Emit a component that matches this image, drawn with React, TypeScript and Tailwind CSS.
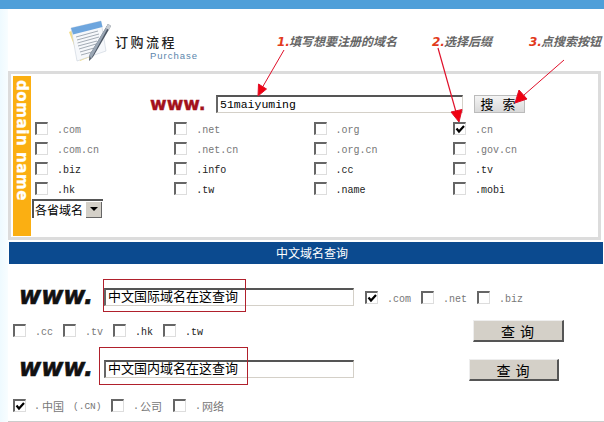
import React from "react";

const cjk = "font-['Noto_Sans_CJK_SC','Liberation_Mono',monospace]";
const mono = "font-['Liberation_Mono','Noto_Sans_CJK_SC',monospace]";

function Box({ checked = false }: { checked?: boolean }) {
  return (
    <span className="block w-[13px] h-[13px] shrink-0 bg-white border-t-2 border-l-2 border-r border-b border-t-[#666] border-l-[#666] border-r-[#ddd] border-b-[#ddd]">
      {checked && (
        <svg viewBox="0 0 10 10" className="w-[10px] h-[10px]">
          <path d="M1.5 4.5 L4 7.5 L9 2" fill="none" stroke="#000" strokeWidth="2.2" />
        </svg>
      )}
    </span>
  );
}

function Tld({ label, checked, dark, className }: { label: string; checked?: boolean; dark?: boolean; className?: string }) {
  return (
    <div className={`flex items-start ${className ?? ""}`}>
      <Box checked={checked} />
      <span className={`ml-[9px] mt-[2px] text-[10px] leading-[13px] whitespace-pre ${mono} ${dark ? "text-[#222]" : "text-[#777]"}`}>{label}</span>
    </div>
  );
}

function Note({ n, text, className }: { n: string; text: string; className?: string }) {
  return (
    <div className={`flex items-baseline italic font-bold text-[12px] leading-[16px] whitespace-nowrap ${className ?? ""}`}>
      <span className="text-[#e23a1c] font-['DejaVu_Sans'] text-[12px] w-[12px]">{n}</span>
      <span className={`text-[#666] ${cjk}`}>{text}</span>
    </div>
  );
}

function Field({ value, mono: isMono }: { value: string; mono?: boolean }) {
  return (
    <input
      readOnly
      value={value}
      className={`block h-[18px] bg-white pl-[2px] text-black outline-none border-t-2 border-l-2 border-r border-b border-t-[#555] border-l-[#666] border-r-[#d4d0c8] border-b-[#d4d0c8] ${isMono ? `w-[247px] text-[11.5px] ${mono}` : `w-[250px] pb-[3px] text-[13px] ${cjk}`}`}
    />
  );
}

function QueryButton({ className }: { className?: string }) {
  return (
    <button className={`h-[22px] bg-[#d4d0c8] border-b-2 border-r-2 border-b-[#555] border-r-[#555] border-t border-l border-t-[#eee] border-l-[#eee] text-[14px] leading-[16px] tracking-[1px] text-black ${cjk} ${className ?? ""}`}>
      查 询
    </button>
  );
}

function Www({ children }: { children: string }) {
  return <span className="block w-[85px] -mt-[2px] font-['DejaVu_Sans'] font-bold italic text-[24px] leading-[18px] text-[#111] [-webkit-text-stroke:0.6px_#111]">{children}</span>;
}

const grid: [string, boolean?, boolean?][] = [
  [".com"], [".net"], [".org"], [".cn", true],
  [".com.cn"], [".net.cn"], [".org.cn"], [".gov.cn"],
  [".biz", false, true], [".info", false, true], [".cc", false, true], [".tv", false, true],
  [".hk", false, true], [".tw", false, true], [".name", false, true], [".mobi", false, true],
];

function Logo() {
  return (
    <svg viewBox="0 0 44 44" className="w-[44px] h-[44px] shrink-0">
      <path d="M1 13 L10 9 L22 38 L12 42 Z" fill="#f3dc87" />
      <path d="M3 9 L33 2 L38 32 L9 42 Z" fill="#f6f8fb" stroke="#c9d2dc" strokeWidth="0.6" />
      <path d="M3 9 L33 2 L34.5 8 L5 15.5 Z" fill="#6ea6de" />
      <path d="M8 18 L30 12 M9 21 L31 15 M9.5 24 L31 18 M10 27 L29 22 M11 30 L28 25 M12 33 L26 29 M13 36 L24 33" stroke="#9aa3ad" strokeWidth="0.9" />
      <path d="M40 5 L43 7 L25 38 L21 42 L21.5 36 Z" fill="#4a5563" />
      <path d="M40 5 L41.5 6 L23 40 L21.5 36 Z" fill="#9aa6b4" />
      <path d="M40 5 L43 7 L41 11 L38 9 Z" fill="#c9ced4" />
    </svg>
  );
}

export default function App() {
  return (
    <div className="relative w-[604px] h-[422px] overflow-hidden bg-white flex flex-col">
      <div className="h-[9px] shrink-0 bg-[#4f9fd9]" />
      <div className="flex flex-1 min-h-0">
        <div className="w-[8px] shrink-0 bg-gradient-to-r from-[#eefaff] to-[#f8fdff]" />
        <div className="flex-1 flex flex-col">
          {/* header */}
          <div className="h-[62px] flex shrink-0">
            <div className="ml-[60px] mt-[10px]"><Logo /></div>
            <div className="ml-[3px] mt-[26px] w-[162px]">
              <div className={`text-[13px] leading-[14px] font-medium tracking-[2.5px] text-[#222] ${cjk}`}>订购流程</div>
              <div className="ml-[35px] mt-px text-[9.5px] leading-[11px] tracking-[1px] text-[#5b86ac] font-['Liberation_Sans']">Purchase</div>
            </div>
            <Note n="1." text="填写想要注册的域名" className="mt-[24px] w-[155px]" />
            <Note n="2." text="选择后缀" className="mt-[24px] w-[97px]" />
            <Note n="3." text="点搜索按钮" className="mt-[24px]" />
          </div>

          {/* domain panel */}
          <div className="w-[593px] h-[169px] shrink-0 border-[3px] border-[#dcdcdc] flex p-[2px] pb-[1px]">
            <div className="w-[18px] bg-[#fbaf12] shrink-0 pt-[4px] flex justify-center">
              <span className="[writing-mode:vertical-rl] font-['DejaVu_Sans'] font-bold text-[15px] leading-[18px] tracking-[0.6px] text-white whitespace-nowrap [-webkit-text-stroke:0.3px_#fff]">domain name</span>
            </div>
            <div className="flex-1 flex flex-col">
              <div className="pt-[19px] h-[37px] flex items-center">
                <span className="ml-[119px] w-[66px] font-['DejaVu_Sans'] font-bold text-[18px] leading-[18px] text-[#a3121c] [-webkit-text-stroke:0.4px_#a3121c]">www.</span>
                <Field value="51maiyuming" mono />
                <button className={`ml-[11px] w-[51px] h-[18px] bg-gradient-to-b from-[#f4f4f4] to-[#d9d9d9] border border-[#bbb] text-[13px] leading-[14px] tracking-[3px] text-black ${cjk}`}>搜 索</button>
              </div>
              <div className="ml-[4px] mt-[9px] grid grid-cols-[139.3px_139.3px_139.3px_139.3px] auto-rows-[20px]">
                {grid.map(([label, checked, dark]) => (
                  <div key={label} className="h-[20px]">
                    <Tld label={label} checked={checked} dark={dark} />
                  </div>
                ))}
              </div>
              <div className={`-mt-[3px] ml-px w-[71px] h-[19px] flex items-center justify-between bg-white border-t-2 border-l-2 border-t-[#555] border-l-[#555] text-[12px] leading-[16px] text-black whitespace-nowrap ${cjk}`}>
                <span className="pl-px">各省域名</span>
                <span className="w-[16px] h-[16px] mr-px shrink-0 bg-[#d4d0c8] border-r border-b border-r-[#666] border-b-[#666] flex items-center justify-center">
                  <span className="block w-0 h-0 border-x-[4px] border-x-transparent border-t-[4px] border-t-black" />
                </span>
              </div>
            </div>
          </div>

          {/* blue bar */}
          <div className={`ml-px mt-[2px] w-[594px] pl-[12px] h-[22px] shrink-0 bg-[#0b4a8f] text-center text-white text-[12px] leading-[21px] ${cjk}`}>中文域名查询</div>

          {/* row A */}
          <div className="mt-[24px] h-[18px] shrink-0 flex items-center pl-[11px]">
            <Www>www.</Www>
            <Field value="中文国际域名在这查询" />
            <Tld label=".com" checked className="ml-[11px] w-[56px] mt-[3px]" />
            <Tld label=".net" className="w-[56px] mt-[3px]" />
            <Tld label=".biz" className="mt-[3px]" />
          </div>

          {/* row B */}
          <div className="mt-[14px] h-[22px] shrink-0 flex items-center pl-[5px]">
            <Tld label=".cc" className="w-[50px]" />
            <Tld label=".tv" className="w-[50px]" />
            <Tld label=".hk" dark className="w-[50px]" />
            <Tld label=".tw" dark className="w-[310px]" />
            <QueryButton className="w-[91px]" />
          </div>

          {/* row C */}
          <div className="mt-[17px] h-[22px] shrink-0 flex items-start pl-[11px]">
            <div className="mt-[1px] flex items-center h-[18px]">
              <Www>www.</Www>
              <Field value="中文国内域名在这查询" />
            </div>
            <QueryButton className="ml-[115px] w-[90px]" />
          </div>

          {/* row D */}
          <div className={`mt-[18px] h-[13px] shrink-0 flex items-start pl-[5px] text-[#777] text-[11px] leading-[13px] whitespace-pre ${cjk}`}>
            <div className="w-[98px] flex items-start">
              <Box checked />
              <span className="ml-[8px] mt-px flex">
                <span className={`w-[8px] text-[10px] ${mono}`}>.</span>
                <span>中国</span>
                <span className={`ml-[9px] text-[9.5px] ${mono}`}>(.CN)</span>
              </span>
            </div>
            <div className="w-[62px] flex items-start">
              <Box />
              <span className="ml-[9px] mt-px flex">
                <span className={`w-[7px] text-[10px] ${mono}`}>.</span>
                <span>公司</span>
              </span>
            </div>
            <div className="flex items-start">
              <Box />
              <span className="ml-[9px] mt-px flex">
                <span className={`w-[7px] text-[10px] ${mono}`}>.</span>
                <span>网络</span>
              </span>
            </div>
          </div>
          <div className="mt-[9px] h-px shrink-0 bg-[#ccc]" />
        </div>
      </div>

      {/* red annotation boxes lying over the fields */}
      <div className="absolute left-[103px] top-[279px] w-[143px] h-[33px] border border-[#b0202c] pointer-events-none" />
      <div className="absolute left-[99px] top-[347px] w-[149px] h-[38px] border border-[#b0202c] pointer-events-none" />

      {/* arrows */}
      <svg viewBox="0 0 604 422" className="absolute inset-0 w-[604px] h-[422px] pointer-events-none">
        <g stroke="#e0102a" strokeWidth="1" fill="#f00010">
          <path d="M284 50 L262 88" fill="none" />
          <path d="M258 96 L258.5 84 L266.5 89 Z" />
          <path d="M438 48 L456 112" fill="none" strokeWidth="1.2" />
          <path d="M459 122 L451 112 L462 109.5 Z" />
          <path d="M564 60 L524 95" fill="none" />
          <path d="M515 103 L519 90 L527 99 Z" />
        </g>
      </svg>
    </div>
  );
}
